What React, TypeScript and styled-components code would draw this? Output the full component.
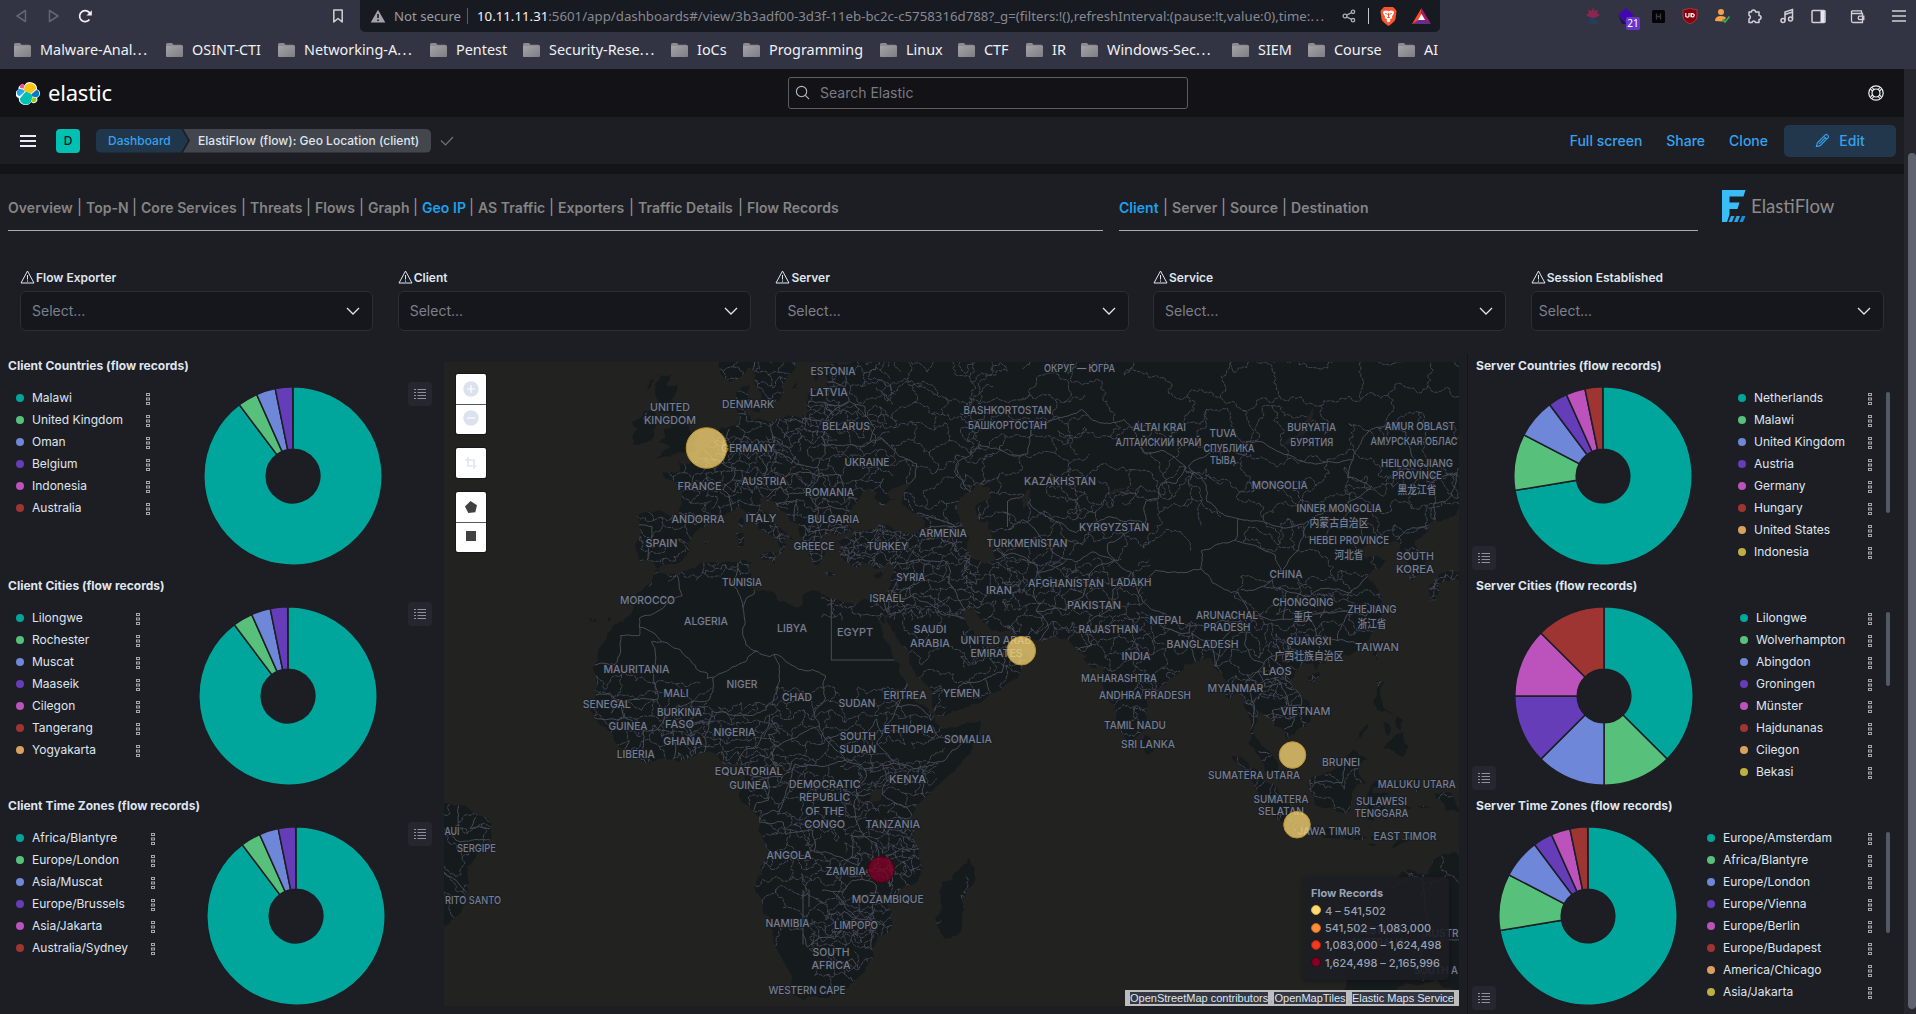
import React from "react";
import styled, { createGlobalStyle } from "styled-components";

const Global = createGlobalStyle`
  * { box-sizing: border-box; }
  html, body { margin: 0; background: #1d1e24; overflow: hidden; }
  body { font-family: Inter, "Noto Sans", "Noto Sans CJK SC", sans-serif; color: #dfe5ef; }
`;

const PALETTE = ["#00a69b", "#57c17b", "#6f87d8", "#663db8", "#bc52bc", "#9e3533", "#daa05d", "#bfaf40"];

/* ---------- browser chrome ---------- */

const Page = styled.div`
  width: 1916px;
  height: 1014px;
  display: flex;
  flex-direction: column;
  overflow: hidden;
`;
const Chrome = styled.div`
  height: 69px;
  flex: none;
  background: #323443;
  font-family: "Noto Sans", sans-serif;
`;
const Toolbar = styled.div`
  height: 32px;
  display: flex;
`;
const NavIcons = styled.div`
  width: 360px;
  flex: none;
  display: flex;
  align-items: center;
  padding-left: 13px;
  gap: 16px;
`;
const Push = styled.span`
  margin-left: auto;
  margin-right: 14px;
  display: flex;
`;
const AddressBar = styled.div`
  width: 1080px;
  flex: none;
  height: 32px;
  background: #181a22;
  border-radius: 0 0 5px 5px;
  display: flex;
  align-items: center;
  padding-left: 10px;
  color: #878991;
`;
const NotSecure = styled.span`
  width: 66px;
  flex: none;
  margin-left: 8px;
  white-space: nowrap;
  color: #9a9ca3;
  font-size: 13.2px;
`;
const Rule = styled.span<{ $m: string; $c: string }>`
  width: 1px;
  flex: none;
  height: 16px;
  background: ${(p) => p.$c};
  margin: ${(p) => p.$m};
`;
const Url = styled.span`
  width: 854px;
  flex: none;
  white-space: nowrap;
  font-size: 13.26px;
  b { color: #f2f2f4; font-weight: 400; }
`;
const Ellipsis = styled.i`
  font-style: normal;
  letter-spacing: 1.5px;
`;
const BarIcon = styled.span<{ $ml: number }>`
  display: flex;
  flex: none;
  margin-left: ${(p) => p.$ml}px;
`;
const Extensions = styled.div`
  flex: 1;
  display: flex;
  align-items: center;
  padding-left: 141px;
`;
const ExtSlot = styled.span<{ $w: number }>`
  position: relative;
  width: ${(p) => p.$w}px;
  flex: none;
  display: flex;
  justify-content: center;
`;
const Count = styled.span`
  position: absolute;
  left: 21px;
  top: 9px;
  width: 14px;
  height: 13px;
  border-radius: 2px;
  background: #6a35c9;
  color: #fff;
  font-size: 10px;
  line-height: 13px;
  text-align: center;
`;
const Bookmarks = styled.div`
  height: 35px;
  display: flex;
  align-items: center;
  padding-left: 14px;
`;
const Bookmark = styled.div<{ $w: number }>`
  display: flex;
  flex: none;
  align-items: center;
  gap: 8px;
  margin-right: 18px;
  color: #f0f0f3;
  font-size: 14.4px;
  line-height: 18px;
  svg { flex: none; }
  span { width: ${(p) => p.$w}px; white-space: nowrap; }
`;

const BOOKMARKS: [string, number, boolean?][] = [
  ["Malware-Anal", 108, true], ["OSINT-CTI", 68], ["Networking-A", 108, true], ["Pentest", 49],
  ["Security-Rese", 104, true], ["IoCs", 28], ["Programming", 93], ["Linux", 34], ["CTF", 24],
  ["IR", 11], ["Windows-Sec", 107, true], ["SIEM", 32], ["Course", 46], ["AI", 14],
];

const Folder = () => (
  <svg width="18" height="16" viewBox="0 0 18 16">
    <defs>
      <linearGradient id="fold" x1="0" y1="0" x2="1" y2="1">
        <stop offset="0" stopColor="#a4a4a8" />
        <stop offset="1" stopColor="#7d7d82" />
      </linearGradient>
    </defs>
    <path d="M0 2.5Q0 1 1.500 1H6L7.500 2.800H15Q17 2.800 17 4.500V13Q17 15 15.500 15H1.500Q0 15 0 13.500Z" fill="#8b8b90" />
    <path d="M0 5Q0 4 1 4H16Q17 4 17 5V13.500Q17 15 15.500 15H1.500Q0 15 0 13.500Z" fill="url(#fold)" />
  </svg>
);

function BrowserChrome() {
  const line = { fill: "none", stroke: "#d0d1d8", strokeWidth: 1.5 };
  return (
    <Chrome>
      <Toolbar>
        <NavIcons>
          <svg width="16" height="16" viewBox="0 0 16 16"><path d="M12.500 2.500V13.500L4 8Z" fill="none" stroke="#646673" strokeWidth="1.500" strokeLinejoin="round" /></svg>
          <svg width="16" height="16" viewBox="0 0 16 16"><path d="M4.500 2.500V13.500L13 8Z" fill="none" stroke="#646673" strokeWidth="1.500" strokeLinejoin="round" /></svg>
          <svg width="16" height="16" viewBox="0 0 16 16"><path d="M12.500 11.500A5.500 5.500 0 1 1 13.200 6" fill="none" stroke="#f1f1f4" strokeWidth="1.700" /><path d="M9.500 7.500H14.800V2.300Z" fill="#f1f1f4" /></svg>
          <Push>
            <svg width="16" height="16" viewBox="0 0 16 16"><path d="M3.800 2H12.200V14L8 10.500L3.800 14Z" {...line} strokeLinejoin="round" /></svg>
          </Push>
        </NavIcons>
        <AddressBar>
          <svg width="16" height="14" viewBox="0 0 16 14"><path d="M8 .8L15.300 13.500H.7Z" fill="#a2a3a9" /><path d="M8 5V9M8 10.500V12" stroke="#181a22" strokeWidth="1.600" /></svg>
          <NotSecure>Not secure</NotSecure>
          <Rule $m="0 9px 0 7px" $c="#5b5d66" />
          <Url><b>10.11.11.31</b>:5601/app/dashboards#/view/3b3adf00-3d3f-11eb-bc2c-c5758316d788?_g=(filters:!(),refreshInterval:(pause:!t,value:0),time:<Ellipsis>...</Ellipsis></Url>
          <BarIcon $ml={11}>
            <svg width="14" height="14" viewBox="0 0 14 14" fill="none" stroke="#a9abb2" strokeWidth="1.300"><circle cx="3" cy="7" r="1.900" /><circle cx="11" cy="2.800" r="1.700" /><circle cx="11" cy="11.200" r="1.700" /><path d="M4.700 6.100L9.500 3.600M4.700 7.900L9.500 10.400" /></svg>
          </BarIcon>
          <Rule $m="0 0 0 12px" $c="#c4c5ca" />
          <BarIcon $ml={11}>
            <svg width="17" height="19" viewBox="0 0 17 19"><path d="M4 0H13L15 2L16.500 4L15.500 12Q15 14.500 8.500 19Q2 14.500 1.500 12L.5 4L2 2Z" fill="#fb542b" /><path d="M3.500 4L6.500 3.500L8.500 4.200L10.500 3.500L13.500 4L14 6L12 9.500L12.300 11L9.800 12.500L10.500 14L8.500 15.500L6.500 14L7.200 12.500L4.700 11L5 9.500L3 6Z" fill="#fff" /><path d="M5.300 6.500L7.600 7.300M11.700 6.500L9.400 7.300M8.500 6V10M7.200 10.500H9.800" stroke="#fb542b" strokeWidth="1" /></svg>
          </BarIcon>
          <BarIcon $ml={15}>
            <svg width="19" height="16" viewBox="0 0 19 16"><path d="M9.500 0L0 16H9.500Z" fill="#ff4724" /><path d="M9.500 0L19 16L9.500 11Z" fill="#9e1f63" /><path d="M0 16L9.500 10.500L19 16Z" fill="#662d91" /><path d="M9.500 5.800L6 12H13Z" fill="#fff" /></svg>
          </BarIcon>
        </AddressBar>
        <Extensions>
          <ExtSlot $w={24}><svg width="18" height="16" viewBox="0 0 18 16"><path d="M9 0L10.500 3L14 1.500L13 5L16 7L12.500 9L9 10L5.500 9L2 7L5 5L4 1.500L7.500 3Z" fill="#8e2450" /><path d="M6 10H12V13H14V16H4V13H6Z" fill="#263c5a" /></svg></ExtSlot>
          <ExtSlot $w={42}><svg width="16" height="16" viewBox="0 0 16 16"><path d="M8 0L15.500 7L8 14L.5 7Z" fill="#4406b5" /><path d="M.5 8L8 15L9 16H4Z" fill="#21105c" /></svg><Count>21</Count></ExtSlot>
          <ExtSlot $w={22}><svg width="13" height="13" viewBox="0 0 13 13"><rect width="13" height="13" rx="1.500" fill="#050507" /><path d="M4.500 3.500V9.500M8.500 3.500V9.500M4.500 6.500H8.500" stroke="#3b3b42" strokeWidth="1.300" /></svg></ExtSlot>
          <ExtSlot $w={42}><svg width="16" height="16" viewBox="0 0 16 16"><path d="M8 0Q10.500 1.600 15 1.600V8Q15 13 8 16Q1 13 1 8V1.600Q5.500 1.600 8 0Z" fill="#86000c" stroke="#b7404b" strokeWidth=".8" /><path d="M3.800 5V8.300Q5.400 10 7 8.300V5M9 5V9.200M9 7.200A1.600 1.600 0 1 1 9 7.400" fill="none" stroke="#fff" strokeWidth="1.200" /></svg></ExtSlot>
          <ExtSlot $w={22}><svg width="16" height="16" viewBox="0 0 16 16"><circle cx="7" cy="4" r="3" fill="#f7a044" /><path d="M1 13Q1 8 7 8Q11 8 12 10L8.500 13.500Z" fill="#f7a044" /><path d="M8.500 11.500L11 14L15.500 8.500" fill="none" stroke="#2fae5b" strokeWidth="1.800" /></svg></ExtSlot>
          <ExtSlot $w={42}><svg width="16" height="16" viewBox="0 0 16 16"><path d="M3 4H5.500A2 2 0 1 1 9.500 4H13V7.500A2 2 0 1 1 13 11.500V14.500H9.500A1.800 1.800 0 0 0 6 14.500H3V11A2 2 0 0 0 3 7.200Z" {...line} strokeLinejoin="round" /></svg></ExtSlot>
          <ExtSlot $w={24}><svg width="16" height="16" viewBox="0 0 16 16"><circle cx="4" cy="12.500" r="2" {...line} /><circle cx="11.500" cy="11" r="2" {...line} /><path d="M6 12.500V4L13.500 1.500V11M6 6.500L13.500 4" {...line} /></svg></ExtSlot>
          <ExtSlot $w={39}><svg width="15" height="15" viewBox="0 0 15 15"><rect x="1" y="1.500" width="13" height="12" rx="1" {...line} /><rect x="9.500" y="2" width="4" height="11" fill="#e6e7eb" /></svg></ExtSlot>
          <ExtSlot $w={39}><svg width="15" height="15" viewBox="0 0 15 15"><path d="M1.500 3V12Q1.500 13.500 3 13.500H12.500V4.500H3Q1.500 4.500 1.500 3Q1.500 1.800 3 1.800H11.500V4M13.800 7.200H9.500Q8.200 7.200 8.200 8.900Q8.200 10.500 9.500 10.500H13.800Z" {...line} strokeWidth="1.300" /></svg></ExtSlot>
          <ExtSlot $w={43}><svg width="14" height="12" viewBox="0 0 14 12"><path d="M0 1H14M0 6H14M0 11H14" {...line} /></svg></ExtSlot>
        </Extensions>
      </Toolbar>
      <Bookmarks>
        {BOOKMARKS.map(([t, w, cut]) => (
          <Bookmark key={t} $w={w}><Folder /><span>{t}{cut && <Ellipsis>...</Ellipsis>}</span></Bookmark>
        ))}
      </Bookmarks>
    </Chrome>
  );
}

/* ---------- Kibana header ---------- */

const Below = styled.div`
  display: flex;
  flex: 1;
  min-height: 0;
`;
const App_ = styled.div`
  width: 1904px;
  display: flex;
  flex-direction: column;
`;
const ScrollTrack = styled.div`
  width: 12px;
  background: #25262e;
  padding: 84px 0 5px 4px;
  div { height: 100%; background: #5f636f; border-radius: 4px; }
`;
const TopHeader = styled.header`
  height: 48px;
  flex: none;
  background: #121217;
  display: flex;
  align-items: center;
  padding: 0 16px;
`;
const Brand = styled.div`
  display: flex;
  align-items: center;
  gap: 8px;
  width: 772px;
  font-family: "Noto Sans", sans-serif;
  font-size: 22px;
  line-height: 28px;
  letter-spacing: -0.2px;
  color: #fff;
  span { margin-top: -2px; }
`;
const Search = styled.div`
  width: 400px;
  height: 32px;
  border: 1px solid #5b5d66;
  border-radius: 3px;
  display: flex;
  align-items: center;
  gap: 10px;
  padding: 0 0 1px 6px;
  font-size: 14px;
  color: #797b83;
`;
const HelpSlot = styled.div`
  margin-left: auto;
  margin-right: 4px;
  display: flex;
`;
const SubHeader = styled.div`
  height: 47px;
  flex: none;
  background: #1d1e24;
  display: flex;
  align-items: center;
  padding: 0 8px 0 20px;
`;
const Gap = styled.div`
  height: 10px;
  flex: none;
  background: #131418;
`;
const Avatar = styled.div`
  width: 24px;
  height: 24px;
  margin: 0 16px 0 20px;
  border-radius: 4px;
  background: #00bfb3;
  color: #10131a;
  font-size: 12px;
  font-weight: 500;
  display: grid;
  place-items: center;
`;
const Crumb = styled.div<{ $first?: boolean }>`
  height: 24px;
  width: ${(p) => (p.$first ? 92 : 248)}px;
  margin-left: ${(p) => (p.$first ? 0 : -5)}px;
  padding-left: ${(p) => (p.$first ? 12 : 15)}px;
  line-height: 24px;
  font-size: 12px;
  font-weight: 500;
  letter-spacing: 0.02px;
  white-space: nowrap;
  color: ${(p) => (p.$first ? "#36a2ef" : "#dfe5ef")};
  background: ${(p) => (p.$first ? "#20374b" : "#43464d")};
  border-radius: ${(p) => (p.$first ? "5px 0 0 5px" : "0 5px 5px 0")};
  clip-path: ${(p) =>
    p.$first
      ? "polygon(0 0, calc(100% - 7px) 0, 100% 50%, calc(100% - 7px) 100%, 0 100%)"
      : "polygon(0 0, 100% 0, 100% 100%, 0 100%, 7px 50%)"};
`;
const Tick = styled.span`
  margin-left: 9px;
  display: flex;
`;
const Actions = styled.div`
  margin-left: auto;
  display: flex;
  align-items: center;
  gap: 24px;
  font-size: 14px;
  font-weight: 500;
  color: #36a2ef;
`;
const EditButton = styled.div`
  width: 112px;
  height: 32px;
  margin-left: -8px;
  border-radius: 5px;
  background: #22374b;
  display: flex;
  align-items: center;
  justify-content: center;
  gap: 9px;
`;

function KibanaHeader() {
  return (
    <>
      <TopHeader>
        <Brand>
          <svg width="24" height="24" viewBox="0 0 32 32">
            <path d="M32 16.800a6 6 0 0 0-4-5.700A9.100 9.100 0 0 0 11.100 5.900 4.900 4.900 0 0 0 3.500 11.300a6.100 6.100 0 0 0 .1 11.500 9.100 9.100 0 0 0 16.700 5.200 4.800 4.800 0 0 0 7.800-5.300 6.100 6.100 0 0 0 3.900-5.900" fill="#fff" />
            <path d="M12.600 13.800l7 3.200 7.100-6.200A8 8 0 0 0 11.400 7.700l-1.200 6.100z" fill="#fec514" />
            <path d="M5.300 21.200A8 8 0 0 0 20.700 24.400L21.900 18.300 20.300 15.200 13.300 12z" fill="#00bfb3" transform="translate(-.1 2)" />
            <path d="M5.300 9.100l4.800 1.100L11.200 4.700A3.800 3.800 0 0 0 5.300 9.100" fill="#f04e98" />
            <path d="M4.900 10.200a5.300 5.300 0 0 0-.3 10.100l6.700-6.100-1.200-2.600z" fill="#1ba9f5" />
            <path d="M20.900 27.400a3.800 3.800 0 0 0 5.900-4.600L22 21.700z" fill="#93c90e" />
            <path d="M21.800 20.500l5.300 1.200a5.300 5.300 0 0 0 .3-10.100l-6.900 6z" fill="#07c" />
          </svg>
          <span>elastic</span>
        </Brand>
        <Search>
          <svg width="15" height="15" viewBox="0 0 16 16" fill="none" stroke="#b5b8c0" strokeWidth="1.200"><circle cx="7" cy="7" r="5.500" /><path d="M11 11L15 15" /></svg>
          Search Elastic
        </Search>
        <HelpSlot>
          <svg width="16" height="16" viewBox="0 0 16 16" fill="none" stroke="#f0f2f6" strokeWidth="1.200"><circle cx="8" cy="8" r="7.200" /><circle cx="8" cy="8" r="4" /><path d="M2.500 4.200L5 6.200M4.200 2.500L6.200 5M13.500 4.200L11 6.200M11.800 2.500L9.800 5M2.500 11.800L5 9.800M4.200 13.500L6.200 11M13.500 11.800L11 9.800M11.800 13.500L9.800 11" /></svg>
        </HelpSlot>
      </TopHeader>
      <SubHeader>
        <svg width="16" height="12" viewBox="0 0 16 12"><path d="M0 1H16M0 6H16M0 11H16" stroke="#e8ecf4" strokeWidth="2" /></svg>
        <Avatar>D</Avatar>
        <Crumb $first>Dashboard</Crumb>
        <Crumb>ElastiFlow (flow): Geo Location (client)</Crumb>
        <Tick><svg width="14" height="10" viewBox="0 0 14 10"><path d="M1 4.500L5.500 9L13 1" fill="none" stroke="#6f727b" strokeWidth="1.200" /></svg></Tick>
        <Actions>
          <span>Full screen</span><span>Share</span><span>Clone</span>
          <EditButton>
            <svg width="15" height="15" viewBox="0 0 16 16" fill="none" stroke="#36a2ef" strokeWidth="1.200"><path d="M1.500 14.500L2.500 10.500L11 2Q12 1 13 2L14 3Q15 4 14 5L5.500 13.500ZM9.500 3.500L12.500 6.500M4.500 11.500L11 5" /></svg>
            Edit
          </EditButton>
        </Actions>
      </SubHeader>
      <Gap />
    </>
  );
}

/* ---------- dashboard navigation and filters ---------- */

const NavRow = styled.div`
  height: 57px;
  flex: none;
  display: flex;
  padding-left: 8px;
`;
const Tabs = styled.nav<{ $w: number; $mr: number }>`
  width: ${(p) => p.$w}px;
  margin-right: ${(p) => p.$mr}px;
  border-bottom: 1px solid #a9aaad;
  display: flex;
  align-items: center;
  padding-bottom: 12px;
  padding-top: 22px;
  font-size: 14px;
  font-weight: 600;
  color: #858585;
`;
const Tab = styled.span<{ $w: number; $on?: boolean }>`
  width: ${(p) => p.$w}px;
  white-space: nowrap;
  letter-spacing: 0.05px;
  color: ${(p) => (p.$on ? "#1ba1ee" : "inherit")};
`;
const Bar = styled.span`
  width: 13px;
  text-align: center;
  font-weight: 400;
  font-size: 15px;
  line-height: 18px;
  color: #9a9a9a;
`;
const Logo = styled.div`
  display: flex;
  align-items: center;
  gap: 5px;
  padding-top: 6px;
  padding-bottom: 0;
  font-family: Lato, sans-serif;
  font-size: 18.6px;
  color: #8c8c8e;
`;

const NAV: [string, number][] = [
  ["Overview", 65], ["Top-N", 42], ["Core Services", 96], ["Threats", 52], ["Flows", 40], ["Graph", 41],
  ["Geo IP", 43], ["AS Traffic", 67], ["Exporters", 67], ["Traffic Details", 96], ["Flow Records", 92],
];
const SIDES: [string, number][] = [["Client", 40], ["Server", 45], ["Source", 48], ["Destination", 79]];

const TabList = ({ items, active }: { items: [string, number][]; active: string }) => (
  <>
    {items.map(([t, w], i) => (
      <React.Fragment key={t}>
        {i > 0 && <Bar>|</Bar>}
        <Tab $w={w} $on={t === active}>{t}</Tab>
      </React.Fragment>
    ))}
  </>
);

const Filters = styled.div`
  height: 123px;
  flex: none;
  display: grid;
  grid-template-columns: repeat(5, 353.4px);
  column-gap: 24.3px;
  padding: 38px 0 0 20px;
`;
const FilterLabel = styled.div`
  height: 22px;
  display: flex;
  align-items: center;
  gap: 1px;
  padding-bottom: 6px;
  font-size: 12px;
  font-weight: 600;
  color: #dfe5ef;
`;
const Select = styled.div<{ $pad: number }>`
  height: 40px;
  border: 1px solid #2c2d35;
  border-radius: 6px;
  background: #16171c;
  display: flex;
  align-items: center;
  justify-content: space-between;
  padding: 0 12px 1px ${(p) => p.$pad}px;
  font-size: 14px;
  color: #7b808b;
`;

/* ---------- donut panels ---------- */

const Board = styled.div`
  height: 660px;
  flex: none;
  display: flex;
`;
const PanelColumn = styled.div<{ $right?: boolean }>`
  width: ${(p) => (p.$right ? 437 : 444)}px;
  border-left: ${(p) => (p.$right ? "1px solid #131418" : "none")};
  flex: none;
`;
const Panel = styled.section`
  height: 220px;
  position: relative;
`;
const PanelTitle = styled.h2`
  margin: 0;
  height: 24px;
  line-height: 23px;
  padding-left: 8px;
  font-size: 12px;
  font-weight: 700;
  letter-spacing: 0.02px;
  white-space: nowrap;
  color: #dfe5ef;
`;
const PanelBody = styled.div<{ $right?: boolean }>`
  height: 196px;
  display: flex;
  flex-direction: ${(p) => (p.$right ? "row-reverse" : "row")};
  padding: ${(p) => (p.$right ? "0 14px 0 0" : "0 9px 0 16px")};
`;
const Legend = styled.ul<{ $w: number }>`
  list-style: none;
  margin: 0;
  padding: 8px 0 0;
  width: ${(p) => p.$w}px;
`;
const LegendItem = styled.li`
  height: 22px;
  display: flex;
  align-items: center;
  font-size: 12px;
  color: #dfe5ef;
  white-space: nowrap;
  svg { margin-left: auto; margin-top: 3px; }
`;
const Dot = styled.i<{ $c: string }>`
  width: 8px;
  height: 8px;
  border-radius: 50%;
  margin-right: 8px;
  margin-top: 2px;
  background: ${(p) => p.$c};
`;
const Thumb = styled.div<{ $h: number }>`
  width: 4px;
  height: ${(p) => p.$h}px;
  margin: 14px 0 0 13px;
  border-radius: 2px;
  background: #535966;
`;
const ChartArea = styled.div`
  flex: 1;
  display: flex;
  justify-content: center;
  padding-top: 8px;
`;
const ListButton = styled.div<{ $right?: boolean }>`
  position: absolute;
  left: ${(p) => (p.$right ? 4 : 408)}px;
  top: ${(p) => (p.$right ? 192 : 28)}px;
  width: 24px;
  height: 24px;
  border-radius: 4px;
  background: #25262e;
  display: grid;
  place-items: center;
`;

type Chart = { title: string; names: string[]; legend: number; stops: number[]; thumb?: number };

const LOPSIDED = [0, 323, 336, 348.5, 359.8];
const SEVEN = [0, 260.7, 297.5, 323.2, 335.8, 348.3, 359.8];

const LEFT: Chart[] = [
  { title: "Client Countries (flow records)", legend: 135, stops: LOPSIDED, names: ["Malawi", "United Kingdom", "Oman", "Belgium", "Indonesia", "Australia"] },
  { title: "Client Cities (flow records)", legend: 125, stops: LOPSIDED, names: ["Lilongwe", "Rochester", "Muscat", "Maaseik", "Cilegon", "Tangerang", "Yogyakarta"] },
  { title: "Client Time Zones (flow records)", legend: 140, stops: LOPSIDED, names: ["Africa/Blantyre", "Europe/London", "Asia/Muscat", "Europe/Brussels", "Asia/Jakarta", "Australia/Sydney"] },
];
const RIGHT: Chart[] = [
  { title: "Server Countries (flow records)", legend: 135, stops: SEVEN, thumb: 121, names: ["Netherlands", "Malawi", "United Kingdom", "Austria", "Germany", "Hungary", "United States", "Indonesia"] },
  { title: "Server Cities (flow records)", legend: 133, stops: [0, 135, 180, 225, 270, 315, 360], thumb: 74, names: ["Lilongwe", "Wolverhampton", "Abingdon", "Groningen", "Münster", "Hajdunanas", "Cilegon", "Bekasi"] },
  { title: "Server Time Zones (flow records)", legend: 166, stops: SEVEN, thumb: 101, names: ["Europe/Amsterdam", "Africa/Blantyre", "Europe/London", "Europe/Vienna", "Europe/Berlin", "Europe/Budapest", "America/Chicago", "Asia/Jakarta"] },
];

const polar = (r: number, deg: number) => {
  const a = (deg * Math.PI) / 180;
  return `${(90 + r * Math.sin(a)).toFixed(2)} ${(90 - r * Math.cos(a)).toFixed(2)}`;
};

function Donut({ stops }: { stops: number[] }) {
  return (
    <svg width="180" height="180" viewBox="0 0 180 180">
      {stops.slice(1).map((end, i) => {
        const start = stops[i];
        const big = end - start > 180 ? 1 : 0;
        return (
          <path
            key={i}
            d={`M${polar(89.2, start)}A89.200 89.200 0 ${big} 1 ${polar(89.2, end)}L${polar(26.8, end)}A26.800 26.800 0 ${big} 0 ${polar(26.8, start)}Z`}
            fill={PALETTE[i]}
            stroke="#1d1e24"
            strokeWidth="1.500"
          />
        );
      })}
    </svg>
  );
}

const Kebab = () => (
  <svg width="6" height="14" viewBox="0 0 6 14" fill="none" stroke="#a3a7b0" strokeWidth="1">
    <rect x="1.500" y="1.500" width="3" height="2" /><rect x="1.500" y="6" width="3" height="2" /><rect x="1.500" y="10.500" width="3" height="2" />
  </svg>
);

function DonutPanel({ chart, right }: { chart: Chart; right?: boolean }) {
  return (
    <Panel>
      <PanelTitle>{chart.title}</PanelTitle>
      <PanelBody $right={right}>
        {chart.thumb && <Thumb $h={chart.thumb} />}
        <Legend $w={chart.legend}>
          {chart.names.map((n, i) => (
            <LegendItem key={n}><Dot $c={PALETTE[i]} />{n}<Kebab /></LegendItem>
          ))}
        </Legend>
        <ChartArea><Donut stops={chart.stops} /></ChartArea>
      </PanelBody>
      <ListButton $right={right}>
        <svg width="12" height="12" viewBox="0 0 12 12" stroke="#8d919b" strokeWidth="1"><path d="M0 1.500H2M3.500 1.500H12M0 4.500H2M3.500 4.500H12M0 7.500H2M3.500 7.500H12M0 10.500H2M3.500 10.500H12" /></svg>
      </ListButton>
    </Panel>
  );
}

/* ---------- map ---------- */

const MapPanel = styled.section`
  width: 1015px;
  height: 644px;
  margin: 8px 8px 0 0;
  position: relative;
  overflow: hidden;
  background: #222220;
`;
const MapTools = styled.div`
  position: absolute;
  left: 12px;
  top: 12px;
  display: flex;
  flex-direction: column;
  gap: 14px;
`;
const ToolGroup = styled.div`
  width: 30px;
  border-radius: 2px;
  background: #fff;
  box-shadow: 0 0 0 1px #16181b;
`;
const Tool = styled.div`
  height: 30px;
  display: grid;
  place-items: center;
  & + & { border-top: 1px solid #535966; padding-bottom: 3px; }
`;
const MapLegend = styled.div`
  position: absolute;
  left: 859px;
  top: 515px;
  width: 146px;
  height: 103px;
  padding: 8px 8px;
  border-radius: 5px;
  background: rgba(29, 30, 36, 0.88);
  box-shadow: 0 1px 4px rgba(0, 0, 0, 0.35);
  color: #98a2b3;
  font-size: 11px;
  h3 { margin: 0; font-size: 11px; line-height: 17px; font-weight: 700; }
`;
const Band = styled.div`
  height: 17.400px;
  display: flex;
  align-items: center;
  gap: 4px;
  font-weight: 500;
  white-space: nowrap;
`;
const BandDot = styled.i<{ $c: string; $b: string }>`
  width: 10px;
  height: 10px;
  flex: none;
  margin-top: -1px;
  border-radius: 50%;
  background: ${(p) => p.$c};
  border: 1px solid ${(p) => p.$b};
`;
const Attribution = styled.div`
  position: absolute;
  right: 0;
  bottom: 0;
  width: 334px;
  height: 16px;
  padding: 0 5px;
  background: #bdbdbd;
  color: #9a9fa8;
  font-family: "Liberation Sans", Arial, sans-serif;
  font-size: 11px;
  line-height: 12px;
  display: flex;
  align-items: center;
  justify-content: space-between;
  white-space: nowrap;
  a { background: #343741; color: #dfe5ef; }
`;

// Web Mercator at zoom 2 (2048 px around the globe).
const RAD = 2048 / (2 * Math.PI);
const px = (lon: number) => 245 + (lon * 2048) / 360;
const py = (lat: number) => 426.7 - RAD * Math.asinh(Math.tan((lat * Math.PI) / 180));

const rng = (seed: number) => () => {
  seed = (seed * 1664525 + 1013904223) % 4294967296;
  return seed / 4294967296;
};

type Pt = [number, number];

const parse = (s: string): Pt[] =>
  s.trim().split(/\s+/).map((p) => {
    const [a, b] = p.split(",").map(Number);
    return [px(a), py(b)];
  });

// Breaks a segment at its midpoint until it is short, nudging each new vertex sideways.
function rough(a: Pt, b: Pt, amp: number, r: () => number, out: Pt[]) {
  const dx = b[0] - a[0];
  const dy = b[1] - a[1];
  const len = Math.hypot(dx, dy);
  if (len < 4) {
    out.push(b);
    return;
  }
  const k = (r() - 0.5) * amp;
  const m: Pt = [(a[0] + b[0]) / 2 - dy * k, (a[1] + b[1]) / 2 + dx * k];
  rough(a, m, amp, r, out);
  rough(m, b, amp, r, out);
}

function trace(pts: Pt[], amp: number, seed: number, close = false) {
  const r = rng(seed);
  const out: Pt[] = [pts[0]];
  for (let i = 1; i < pts.length; i++) rough(pts[i - 1], pts[i], amp, r, out);
  if (close) rough(pts[pts.length - 1], pts[0], amp, r, out);
  return "M" + out.map((p) => `${p[0].toFixed(1)} ${p[1].toFixed(1)}`).join("L") + (close ? "Z" : "");
}

const COASTS = [
  "-5.9,35.8 -5.3,35.9 -5.2,35.4 -4,35.2 -3,35.3 -2,35.1 -1,35.7 0,35.9 1.5,36.5 3,36.9 5,36.8 7,37 8.5,36.9 9.8,37.3 10.3,37.2 10.2,36.8 11,37 10.5,36.4 10.6,35.8 11,35.2 10.6,34.7 10,34.2 10.3,33.7 11.1,33.2 12.5,32.8 13.2,32.9 15.2,32.4 15.4,31.6 16,31.2 18,30.7 19,30.3 20,30.9 19.9,31.7 20.1,32.3 21.5,32.9 23,32.7 23.2,32.3 25,31.8 25.3,31.5 27,31.2 29,30.8 30.2,31.3 31,31.6 32.5,31.1 32.5,29.9 32.6,29.5 33.6,27.8 34,26.5 35.5,24 35.6,23.2 37,21.5 37.2,19.5 38.5,18 39.3,15.8 40,15 41.2,14.6 42.5,13.2 43.2,12.4 43.3,11.5 44.5,10.4 46,10.8 48,11.2 50,11.5 51.2,11.9 51.1,10.6 50.8,9.3 49.8,7.8 48.5,5.3 47,3.5 45.5,2.2 43.5,.5 42,-1 41,-2 40.2,-2.7 39.5,-4.2 38.8,-6 39.5,-7 39.4,-8.5 40.4,-10.4 40.5,-12 40.7,-14.8 39.8,-16.4 37,-17.8 36,-19 34.8,-19.9 35.5,-22 35.4,-24 33,-25.2 32.7,-26.5 32.5,-28.5 31,-29.9 30,-31.3 28,-33 25.7,-34 22,-34.2 20,-34.8 18.5,-34.2 18,-32.5 18.2,-31.6 17,-29.5 16.3,-28.5 15.2,-26.8 14.8,-25 14.4,-22.5 13,-20.3 11.8,-18 11.8,-16 12.5,-13.5 13.7,-12 13.8,-10.5 13,-8.8 12.3,-6 11.8,-4.6 9.8,-2.7 8.8,-.8 9.4,.5 9.8,2 9.6,3.8 8.9,4.5 7,4.4 5.9,4.4 5,5.9 4,6.4 2,6.3 1,5.9 -2,4.8 -3.5,5.1 -6,4.9 -7.5,4.4 -9.2,5.6 -11,6.8 -12.5,7.5 -13.2,8.6 -13.5,9.6 -15,10.9 -16.7,12.4 -17.4,14.7 -16.5,16 -16.2,18 -16.3,19.2 -17,20.9 -16,22 -16,23.6 -15,24.8 -14.4,26.2 -13,27.7 -11.5,28.2 -10,29.5 -9.7,31 -9.2,32.5 -7.5,33.6 -6.6,34.3",
  "32.5,31.1 34.2,31.3 34.9,32.8 35.5,33.9 35.9,35.8 36.1,36.7 35,36.6 34,36.2 32.5,36.1 30.6,36.8 29.5,36.2 28,36.8 27.3,37.2 26.4,38.5 26.8,39.3 26.1,39.9 27.5,40.4 29,40.5 29,41.2 31.3,41.2 33.3,42 35,42 36.2,41.3 38,41 40,41 41.5,41.5 41.5,42.5 39,43.8 37.4,44.8 37.5,45.5 38.3,46.5 39,47.2 36.5,46.7 35.2,46.3 34.9,45.9 35.3,45.3 36.4,45.3 35,44.9 33.7,44.4 33,45.2 32.5,45.4 33.2,46.1 31.5,46.6 30.5,46.2 29.6,45 28.6,44 28,43.2 27.7,42.5 28.1,41.7 29,41.2 27.5,40.9 26.2,40.6 25,40.9 24,40.8 23.3,40.2 22.8,40.4 23.2,39.2 24,38.2 23.5,37.5 22.8,36.6 21.7,36.9 21.2,38.2 20.2,39.5 19.4,40.6 19.4,41.9 17.5,43 15.5,44 14.5,45.2 13.6,45 13.5,45.7 12.4,45.3 12.5,44.2 13.6,43.6 14.2,42.4 15.8,41.9 16.5,41.2 18.4,40 17,40.5 16.6,39.7 17.1,39 16.2,38 15.7,38 16.1,39 15.6,40.1 14.3,40.7 13,41.3 11.2,42.4 10.3,43.6 8.8,44.4 7.5,43.8 6,43.1 4,43.5 3.1,43 3.2,41.9 1,41 -.3,39.5 .2,38.7 -.7,37.7 -2,36.8 -4.5,36.7 -5.6,36 -6.4,36.9 -8.8,37 -9.4,38.7 -8.7,40.5 -8.8,42 -9.2,43.1 -7.8,43.7 -4,43.4 -1.8,43.4 -1.2,44.8 -1.2,46 -2.5,47.3 -4.5,48 -4.6,48.5 -1.6,48.6 -1.8,49.7 -1.2,49.4 .2,49.5 1.6,50.3 2.5,51.1 3.8,51.7 4.7,53 7,53.5 8.6,53.8 8.8,54.8 8.1,55.6 8.3,57 10.6,57.7 10.3,56.4 10.9,56.3 9.7,55.2 10.9,54.3 12.5,54.4 14.2,54 16.5,54.5 18.6,54.7 19.8,54.4 21,55.2 21.1,56.8 21.8,57.5 23,57 24.3,57.2 24.4,58.3 23.5,58.8 24.5,59.4 27.5,59.5 30,59.9 28.5,60.4 25,60.2 22.8,59.9 22.5,61.5 22,63 140,63 140,54 140.5,50 140,48 138,46 135.5,44.3 133,42.7 131,42.6 130,42 129.7,41 127.5,39.8 128.4,38.5 129.4,37 129.3,35.5 127.5,34.6 126.4,34.5 126.5,36.8 125.2,37.8 125,39.5 124,39.9 121.5,38.9 121.3,39.6 122,40.6 120.8,40.5 119,39.2 117.8,38.8 119,37.3 120.8,37.8 122.5,37.2 120.5,36 119.3,35 120.5,33.8 121.8,31.8 121,30.5 122,29.8 121.5,28.3 119.8,26 118,24.4 116.5,23 114,22.3 111.8,21.6 110.4,21.2 110.3,20.3 109.8,21.5 108,21.6 106.6,20.2 105.7,18.8 107,17 108.8,15.3 109.3,13 109.2,11.7 107,10.4 106.5,9.5 105,8.7 104.9,10 103,11 102.4,12.2 100.9,12.8 100.4,13.5 99.9,12 99.2,10.2 100.3,8.3 101.5,6.9 103.2,5 103.5,3 104.2,1.4 103.4,1.4 101.3,2.9 100.4,5.5 99.5,7 98.3,8 98.7,10.3 98.5,12.5 97.7,15.5 96.5,16.5 95.3,15.8 94.3,16 94.5,18.2 93.6,19.8 92.2,20.8 91.8,22.4 90.5,22.2 89,21.7 87,21.3 86.8,20.3 85,19.3 82.5,17 81.8,16.2 80.3,15.7 80.2,13.3 79.8,11 79.8,10.2 79,9.3 78.2,8.8 77.5,8 76.4,9.6 75,12 74.3,14.8 73.2,17 72.8,19.2 72.8,21 72.3,21.2 71,20.8 69.2,22.2 70,22.8 68.6,23.4 67.3,24.6 66.5,25.4 62,25.1 59,25.4 57.3,25.8 56.6,27 54.5,26.6 52.5,27.5 51,28.8 50,30.1 48.7,30.2 48,29.5 48.8,28 50.1,26.6 50.1,25.5 50.8,24.8 51,25.9 51.6,25.5 51.4,24.4 52.5,24.2 54.5,24.4 56,26 56.4,24.8 57,24 58.7,23.6 59.8,22.5 58.5,20.4 57.7,19 55.3,17.5 53,16.5 52,15.5 49,14.2 45.5,13 43.5,12.7 42.8,15 42.6,16.8 41,18.8 39.2,21 38.5,23.5 37,25 35.5,27.5 34.7,28.2 35,29.5 34.3,27.8 33.2,28.8 32.6,29.9",
  "5,62 5,60 5.5,58.8 7,58 8.5,58.2 10.5,59.3 11.2,59 12,57.5 12.8,56 12.9,55.4 14.2,55.5 14.5,56 16,56.2 16.6,57.8 18.8,59.5 18.5,60.5 17.3,61.5 17,63",
  "11.1,55.7 12.5,56 12.2,55 11.2,55.2",
  "18.2,57.4 19,57.9 18.6,57.1",
  "22,58.5 23.2,58.6 22.3,58",
  "-5.7,50.1 -3.5,50.3 -2,50.7 1,50.9 1.4,51.3 .8,51.6 1.7,52.6 .3,52.9 0,53.6 -1.4,54.9 -2,55.9 -3.3,56.2 -2,57.3 -2,57.7 -4,57.7 -3.1,58.6 -5,58.6 -6,57 -5.2,56 -5,54.9 -3.4,54.9 -3.1,53.4 -4.5,53.3 -4.2,52.4 -5.2,51.9 -3,51.4 -4.5,50.9",
  "-6.1,53.3 -6.4,52.3 -9.8,51.6 -9.9,52.3 -9,53.2 -10,54.1 -8.4,54.5 -8,55.2 -6.5,55.2 -5.6,54.5",
  "-7,57.8 -6.2,58.4 -7.4,57.1",
  "8.2,40.9 9.6,40.9 9.6,39.2 8.5,39",
  "8.6,42.5 9.4,43 9.5,42 9.2,41.4",
  "12.5,38 15.6,38.2 15.1,36.7 12.6,37.6",
  "23.6,35.5 26.2,35.2 24.8,34.9",
  "32.4,35 34.5,35.6 33.8,34.9 33,34.6",
  "2.4,39.6 3.3,39.8 3,39.3",
  "-17.5,28.8 -17,28.5 -17.3,28.2",
  "-16.9,28.4 -16.2,28.5 -16.6,28",
  "-14.4,28.6 -13.8,28.9 -14,28.1",
  "49.3,-12 50.4,-15.5 49.5,-17 48,-22 47,-25 45,-25.5 43.7,-23.5 43.4,-22 44.4,-20 44,-17.5 44.5,-16.2 46.3,-15.7 48,-13.6",
  "79.9,9.7 81.2,8.6 81.8,7 80.6,5.9 79.9,7",
  "95.3,5.6 97.5,5.2 100.3,2.7 103.5,.2 103.8,-1 106,-3 105.8,-5.8 104.5,-5.8 102.3,-4 100.3,-1 98.7,1.7",
  "105.2,-6.8 106.2,-5.9 108.5,-6.7 110.8,-6.4 112.7,-7 114.5,-7.8 114.4,-8.7 110,-8.1 106.5,-7.4",
  "109,1.5 109.6,2 111.3,2.4 113,3.1 115,5 116.8,7 119.2,5.2 117.6,3.5 118,2.2 119,1 117.5,.8 116.5,-1.5 116.2,-3.9 114.6,-4.1 113,-3.2 110.2,-2.9 110,-1.3 109.1,-.2",
  "119.8,.2 120.8,1.3 124,.8 125.2,1.5 124.3,.4 120.2,.4 120.2,-.9 121.5,-.9 123.3,-.8 121.7,-1.9 122.3,-3.5 123,-4.2 122.6,-5.5 121.5,-4.7 121,-2.8 120.3,-3 120.4,-5.6 119.4,-5.4 119.5,-3.5 118.8,-2.7",
  "120.6,18.5 122.2,18.4 121.6,16 122,14.2 124,12.8 121,13.7 120.3,15",
  "122,7 123.5,8.6 125.5,9.8 126.5,7.3 125.4,5.6 124,6.6",
  "122,11.7 123.2,11 122.8,9.2 122.3,10.5",
  "124.4,12.5 125.5,12 125,10.2 124.4,10.7",
  "117.2,8.4 119.4,11.3 119.2,10.4",
  "121,25.1 121.9,25 120.9,22 120.1,23",
  "108.7,19.3 110.6,20.1 110.9,19.5 109.5,18.2",
  "130,33.5 131,34 131,34.4 133,35.5 136,35.7 137,37 138,37 138,34.6 135.8,33.5 135,34.6 133,34.3 131.8,33.9 132,32.8 131.3,31.4 130.2,31.3 130,32.8",
  "127.5,1.8 128.6,1.5 127.9,-.7",
  "128,-3.2 130.7,-3.2 129.5,-3.5",
  "126,-3.2 127,-3.2 126.6,-3.8",
  "123.5,-10.3 125,-8.9 127.2,-8.4 125,-9.7",
  "119.8,-8.5 122.8,-8.2 122,-8.9 120,-8.9",
  "116.8,-8.5 119,-8.4 118.7,-8.9 116.8,-9",
  "115,-8.3 116.7,-8.4 116,-8.9",
  "119,-9.5 120.8,-10 119.8,-10",
  "131,-.8 134,-.8 135,-3.3 137,-2 137,-4.8 133,-4 132.8,-2.8 131.2,-1.5",
  "115.7,-32 115,-29.5 113.5,-26.5 113.7,-22.5 116.8,-20.6 119,-20 121.5,-19 122.3,-17.3 123.7,-17 124.5,-15.5 126.5,-14 128.2,-14.9 129.6,-15 130.7,-12.5 132.6,-11.4 136.8,-12.2 135.5,-15 140,-17.5 140,-36.5 138,-35.5 136,-35 134,-33 131,-31.5 126,-32.3 123.5,-34 120,-34 118,-35 115,-34.3",
  "-43.2,-2.6 -41.5,-2.9 -39.9,-2.9 -38.5,-3.7 -37,-4.8 -35.3,-5.2 -34.8,-7 -35,-9 -37,-11 -38,-12.7 -39,-13.5 -39,-17 -39.7,-19.5 -41,-21.9 -42,-23 -45,-23.5 -50,-25 -50,-1",
].map((s, i) => trace(parse(s), 0.34, 11 + i, true)).join("");

const LAKES = [
  "47.5,43 47,44.5 48.5,46 50.5,47 53,46.7 53.1,45.4 51,44.8 50.3,44.4 51,42.5 52.7,42.5 52.6,41.5 53.8,40 53.8,37.2 52,36.7 50,37.4 49,38.5 49.3,40.3 48,42",
  "58.5,45.500 60,46.6 59.5,44.9 58.7,44",
  "104,51.6 106.5,52.5 109.8,55.6 109.2,53.6 106,51.9",
  "31.8,-.5 34,0 33.8,-2 31.8,-2.2",
  "73.6,45.5 75,46.6 79,46.6 75,46.2",
  "30.8,60.6 32.6,60.8 32.8,59.8 31.2,59.9",
].map((s, i) => trace(parse(s), 0.3, 71 + i, true)).join("");

const BORDERS = [
  "-2.1,35.1 -1.7,33.2 -1.2,32.1 -3,31.5 -5,30 -8.7,28.7 -8.7,27.3 -4.8,25 1.2,21.1 1.2,20.7 3.2,19.9 3.2,19 4.2,19.2 7.500,20.900 12,23.500 14.2,22.6 15,23 24,19.5 24,15.7 22.5,14 22,12.6 22.9,11 24,8.7 27.4,5 30.8,3.5",
  "-8.7,27.3 -8.7,26 -12,26 -12,23.5 -13,21.3 -17,21", "-4.8,25 -6.6,25 -5.5,16.5 -5.5,15.5 -9.3,15.5 -12,15 -14,16.6 -16.4,16.2",
  "8.6,36.9 8.3,35 7.5,33.8 9,32 9.5,30.3 9.9,28 9.4,26.2 10,24.5 12,23.5", "9.5,30.3 10.3,31.9 11.5,32.4 11.5,33.1",
  "15,23 15.9,20.3 15.5,16.9 13.5,14 13.6,13.7 9,12.8 4,13.5 3.6,11.7 2.7,9 2.7,6.4", "4.2,19.2 4.2,16.8 3.5,15.4 .2,15 -2,14.2 -4.3,12.7 -5.5,10.4 -8,10.2 -11.4,12.4 -12,15",
  "-5.5,10.4 -2.8,9.7 -2.8,5.1", "-2.8,9.7 -2.8,11 0,11.1 1.2,6.1", "-8,10.2 -8,8 -7.5,4.4", "-11.4,12.4 -16.7,12.4", "-10.5,8.5 -11.4,6.9", "0,11.1 2.2,11.8 3.6,11.7",
  "8.6,4.8 10,7 12,7.5 13.3,10 14.2,12.8", "14.4,12 15.5,10 14,9.5 15.2,7.3 14.5,5 16.2,2.2 11.3,2.2 9.8,2.3", "11.3,1 14,2 14,-2 12,-2.4 11.2,-4", "15.2,7.3 19,9 22.9,11",
  "27.4,5 22.5,4.1 18.6,4.3 18,2 17,-1 15.8,-4 13,-4.6 12.3,-5.9 16.6,-5.9 17,-8 21.8,-7.3 22,-11 24,-11 27,-12 29.8,-13.4 29.8,-12.2 28.5,-12 28.6,-8.5 30.8,-8.3 33,-9.5",
  "30.8,-8.3 29.5,-6 29.3,-4.5 29,-2.7 29.6,-1.4 29.6,.5 31.2,2.2 30.8,3.5 34,4.2 34.9,1.5 34,.1 34,-1 37.6,-3 39.2,-4.7", "29.6,-1.2 34,-1",
  "33,-9.5 33.3,-12 32.7,-13.7 34.5,-14.5 35.3,-17 35.8,-16 35.5,-14.5 34.6,-11.6 40.4,-10.5", "32.7,-13.7 30.3,-15 30.4,-15.7",
  "23.4,-17.6 25.3,-17.8 27,-17.9 28.9,-15.9 30.4,-15.7 32.9,-16.7 32.5,-19 32.5,-21.3 31.3,-22.4 29.4,-22.2 27.5,-20.5 25.3,-17.8", "31.3,-22.4 32,-24.5 32,-26.8",
  "20,-24.8 20.8,-26.8 23,-25.3 25.6,-25.5 27,-23.7 29.4,-22.2", "27,-29.6 28.7,-28.6 29.4,-29.6 28,-30.6 27,-29.6",
  "24,8.7 28,9.4 31,9.8 33,12.2 34,9.5 33,8 36,4.5 34,4.2", "34,9.5 34.3,10.6 36,12.7 36.5,14.3 38.5,18", "36.5,14.3 40,14.5 42.4,12.5",
  "36,4.5 39.5,3.5 41.9,3.9 41,2.8 41,-1 41.6,-1.7", "41.9,3.9 45,5 48,8 44,9 42.8,10.9",
  "35,29.3 37,29.6 38,30.5 37,31.5 39,32.1 42,31.1 44.7,29.2 46.5,29.1 48.5,28.5", "39,32.1 38.8,33.4 41,34.4 41.3,36.5 42.4,37.1 44.8,37.2 46,35.5 45.5,34 47.8,31 48.5,30",
  "35.7,32.7 36.8,32.3 38.8,33.4", "36,36 36.7,36.8 42.4,37.1", "34.9,29.5 34.3,31.3", "35,29.5 35.6,32.7 36.6,34.2", "42.8,16.4 44,17.4 47,17 48.2,18.2 52,19 53.1,16.6",
  "52,19 55,20 55.6,22 55.2,22.7 52.6,22.9 51.6,24.2", "55.2,22.7 55.8,24.3 56.3,24.9",
  "53.9,37.3 57,38.2 61.2,36.6 60.5,34 61,31.4 61.8,30.9 61,29.8 63.2,27.2 61.6,25.2", "61,29.8 66.3,29.9 67,31.3 69.3,32 70,34 71.5,36.3 74.9,37.2 71,38.4 68,37 66.5,37.4 64.5,36.3 61.2,35.5",
  "56,41.3 58.6,42.7 60,42 62,40 66.5,37.4", "56,45 58.6,45.6 62,43.5 66,42 68,41 70.9,42.2 73.5,43 80.2,42.2 77,41 73.7,39.6 73.6,38.5 74.9,37.2",
  "68.2,23.7 70.8,24.4 70,28 73,29.5 74.5,31 74.5,33 77.8,35.5 75,37", "77.8,35.5 79,32.5 81,30.2 86,28 92,27.8 97,28.3", "80.2,28.8 83,27.5 88,26.4 88.1,27.9",
  "89,21.8 88.5,24.5 88.4,26.4 90,25.3 92.3,25 92.3,23 92.6,21 93.3,24 95,26.5 97,28.3 98.5,27.5 97.7,24.5 99.3,22 101,21.5 102.5,22.7 105,23.2 106.8,22 108,21.6",
  "101.2,21.5 100.1,20.3 97.8,18.5 98.8,16 99.2,13 98.7,10.3", "102.2,22.4 104.8,20.2 105,18.7 107.5,16 107.6,14.5 106,11 104.6,10.4", "100.1,20.3 101.2,17.6 104,18.3 105.5,14.4 107.5,14.5", "105.5,14.4 102.5,13.6 102.8,11.8", "100.1,6.5 102,6.1",
  "80.2,42.2 80.3,45 82.5,45.3 83,47.2 85.6,47.2 87.3,49.1 83,51 80,50.8 76.5,54.3 71,54.2 69,55.3 65,54.5 61,54 59.5,50.6 55,51 51,51.6 47,49.5 46.7,48.5 49,46.4",
  "87.8,49.2 92,50.8 98,50.5 98,52 102.3,51.3 107,49.9 116.7,49.9 115.8,47.9 119.8,46.7 111.9,43.7 109,42.5 105,41.6 96.5,42.8 91,45 90.9,47 87.8,49.2",
  "116.7,49.9 120,53.3 126,53 127.6,50 131,47.8 135,48.4 133,45 131,44.8 131,42.6", "124.4,40 127,41.6 130.5,42.3", "126.7,37.8 128.4,38.6",
  "79,32.5 82,35.8 90,36 92,34 96.5,32.6 99,29 98.5,27.5", "96.5,42.8 96,40 92,39 90,38.500 90,36", "96,40 103,38 104,35.500 101,33.5 97,33", "104,35.5 107,38.500 109,42.500",
  "101,33.5 105,32.8 109,32 112,33.2 116,32.5 119.3,35", "105,32.8 104.5,28.5 99,29", "104.5,28.5 109,29 110.3,26 114,25.2 116,29.8 112,29.6 109,29", "114,25.2 118,24.4", "110.3,26 106,24.800 105,23.2", "116,29.8 119,29 121,30.5",
  "-1.8,43.4 .7,42.8 3.1,42.4", "-8.8,42 -6.5,41.8 -7,39.8 -7.2,38 -7.4,37.2", "2.5,51.1 4.2,50 6,49.5 8.2,49 7.6,47.6 6,46.4 7,45.8 7.5,43.8",
  "14.2,53.9 14.7,51 12.3,50.3 13.8,48.8 13,47.6 9.6,47.5 7.6,47.6", "6,49.5 6,51.8 7.1,53.3", "8.6,54.9 10,54.8", "14.7,51 17,50.3 18.9,49.5 22.6,49.1 24,50.6 23.5,52.5 23.8,54 19.8,54.4",
  "23.5,51.6 27,51.5 31,51.5 33.8,52.3 37,50.3 40,49.5 39.8,47.9 38.2,47.1", "22.6,49.1 22.9,48 26.6,48.2 28.2,45.5 29.6,45.3", "17,48 20.5,48.5 22.9,48 20.3,46.1 17,45.9 16.1,46.9 17,48",
  "20.3,46.1 22.7,44.2 27,44.1 28.6,43.8", "22.7,44.2 22.4,42.3 23,41.3 26.4,41.7 28,42", "20,42 21,41 23,41.3", "13.6,45.5 16.1,46.9", "15.8,44.8 19,45 18.5,42.5", "31.8,52 32.7,53.4 31,54.7 30.9,55.6 28.2,56.1 26.6,55.6 24,54",
  "21,56.1 26.6,55.7 28.2,56.2 27.4,57.5 25,58 24.4,57.9", "27.4,57.5 28,59.4", "11.2,59 12,61", "-7.5,55 -8,54.4 -6.2,54.1", "41.5,41.5 46.5,41.8 48.5,41.8", "43.5,41.1 44.8,39.7 48,39.7", "40,43.5 44,42.700 47,41.5",
  "110,1 112,1.400 114.800,1 115.200,4.800", "129,-14.9 129,-32", "129,-26 138,-26", "-43,-7 -41,-9 -38,-9 -35,-9", "-40.5,-3 -41,-7", "-37.5,-5 -38.500,-7 -35,-7", "-43,-14.500 -40,-17 -39,-18",
].map((s, i) => trace(parse(s), 0.24, 131 + i)).join("");

// Province mesh: jittered honeycomb cells over a rectangle [x0, y0, x1, y1, cell size].
const MESH_ZONES = [
  [195, 100, 260, 205, 11], [260, 78, 330, 205, 9], [330, 48, 430, 200, 13], [430, 0, 520, 175, 19], [380, 0, 430, 48, 14], [270, 0, 370, 70, 11],
  [520, 0, 620, 210, 21], [620, 0, 1015, 120, 36], [620, 120, 720, 160, 30], [800, 120, 1015, 230, 27], [320, 175, 400, 200, 12],
  [380, 170, 520, 250, 9], [520, 195, 560, 290, 14], [560, 200, 690, 270, 12], [560, 270, 680, 375, 22], [690, 260, 830, 340, 17],
  [830, 230, 950, 320, 25], [720, 320, 850, 420, 18], [450, 250, 520, 330, 24], [150, 320, 240, 395, 14], [240, 345, 330, 400, 9],
  [330, 330, 480, 410, 14], [290, 400, 360, 500, 14], [400, 400, 480, 500, 12], [360, 430, 400, 560, 24], [430, 460, 480, 560, 13],
  [300, 500, 400, 560, 19], [370, 550, 450, 610, 14], [520, 520, 600, 640, 10], [0, 440, 60, 580, 18], [960, 190, 1015, 260, 7],
  [740, 420, 1015, 500, 22],
];

function meshPath() {
  const parts: string[] = [];
  MESH_ZONES.forEach(([x0, y0, x1, y1, c], z) => {
    const r = rng(900 + z * 17);
    const w = c * 1.0;
    const h = c * 0.9;
    const cols = Math.ceil((x1 - x0) / w) + 1;
    const rows = Math.ceil((y1 - y0) / h) + 1;
    const v: Pt[][] = [];
    for (let j = 0; j <= rows; j++) {
      v.push([]);
      for (let i = 0; i <= cols; i++) v[j].push([x0 + (i + (r() - 0.5) * 0.85) * w, y0 + (j + (r() - 0.5) * 0.85 + (i % 2 ? 0.25 : -0.25)) * h]);
    }
    for (let j = 0; j < rows; j++)
      for (let i = 0; i < cols; i++) {
        if (r() > 0.12) parts.push(trace([v[j][i], v[j][i + 1]], 0.7, 7 + i * 31 + j * 101 + z));
        if ((i + j) % 2 === 0 && r() > 0.08) parts.push(trace([v[j][i], v[j + 1][i]], 0.7, 5 + i * 57 + j * 13 + z));
      }
  });
  return parts.join("");
}
const MESH = meshPath();

// [text, centre x, centre y, width]
const LABELS: [string, number, number, number][] = [
  ["ESTONIA", 389, 9, 45], ["LATVIA", 385, 30, 38], ["DENMARK", 304, 42, 52], ["UNITED", 226, 45, 40], ["KINGDOM", 226, 58, 52],
  ["BELARUS", 402, 64, 48], ["GERMANY", 304, 85.5, 54], ["UKRAINE", 423, 100, 45], ["FRANCE", 255.5, 124, 44], ["AUSTRIA", 320, 119, 45],
  ["ROMANIA", 385.5, 129.500, 49], ["ANDORRA", 254, 157, 53], ["ITALY", 317, 156, 31], ["BULGARIA", 389.5, 156.5, 52], ["SPAIN", 217.5, 181, 32],
  ["GREECE", 370, 183.5, 41], ["TURKEY", 443.5, 184, 41], ["ARMENIA", 499, 170.5, 48], ["SYRIA", 466.7, 214.5, 29], ["ISRAEL", 443, 236, 35],
  ["TUNISIA", 298, 220, 40], ["MOROCCO", 203.5, 238, 55], ["ALGERIA", 262, 259, 44], ["LIBYA", 348, 266, 30], ["EGYPT", 411, 270, 36],
  ["SAUDI", 486, 267, 33], ["ARABIA", 486, 280.5, 40], ["MAURITANIA", 192.5, 307, 66], ["NIGER", 298, 322, 31],
  ["ОКРУГ — ЮГРА", 635.5, 6, 71], ["BASHKORTOSTAN", 563.5, 48, 88], ["БАШКОРТОСТАН", 563.5, 62.5, 79], ["ALTAI KRAI", 715.5, 64.5, 53],
  ["АЛТАЙСКИЙ КРАЙ", 714.5, 79.5, 86], ["TUVA", 779, 71, 27], ["СПУБЛИКА", 785, 85.5, 51], ["ТЫВА", 779, 97.5, 26], ["BURYATIA", 867.7, 64.5, 49],
  ["БУРЯТИЯ", 867.7, 79.5, 43], ["AMUR OBLAST", 975.7, 64, 70], ["АМУРСКАЯ ОБЛАС", 970, 78.5, 87], ["HEILONGJIANG", 973, 101, 72], ["PROVINCE", 973, 113, 50],
  ["黑龙江省", 973, 127.7, 39], ["KAZAKHSTAN", 616, 119, 72], ["MONGOLIA", 835.7, 122.5, 56], ["INNER MONGOLIA", 895, 145.5, 85], ["内蒙古自治区", 895, 160.5, 59],
  ["KYRGYZSTAN", 670, 165, 70], ["HEBEI PROVINCE", 905, 177.7, 80], ["河北省", 905, 192.5, 29], ["TURKMENISTAN", 583, 181, 81], ["SOUTH", 971, 194, 38],
  ["KOREA", 971, 207, 38], ["IRAN", 555, 228, 26], ["AFGHANISTAN", 622, 220.5, 76], ["LADAKH", 687, 219.5, 41], ["CHINA", 842, 212, 33],
  ["PAKISTAN", 650, 243, 54], ["CHONGQING", 859, 239.5, 61], ["重庆", 859, 255, 19], ["ZHEJIANG", 928, 246.5, 49], ["浙江省", 928, 261.5, 29],
  ["NEPAL", 723, 258, 35], ["ARUNACHAL", 783, 252.5, 62], ["PRADESH", 783, 264.5, 47], ["RAJASTHAN", 664.5, 266.5, 60], ["UNITED ARAB", 552, 277.5, 71],
  ["EMIRATES", 552.5, 290.5, 52], ["BANGLADESH", 758.5, 281.5, 72], ["GUANGXI", 865, 278.5, 45], ["广西壮族自治区", 865, 293.5, 69], ["TAIWAN", 933, 284.5, 44],
  ["INDIA", 692, 294, 29], ["LAOS", 833, 308.5, 29], ["MAHARASHTRA", 675, 315.5, 76], ["ANDHRA PRADESH", 701, 333, 92], ["MYANMAR", 791.5, 325.5, 56],
  ["TAMIL NADU", 691, 362.5, 62], ["VIETNAM", 861.5, 348.5, 50], ["SRI LANKA", 704, 382, 54], ["BRUNEI", 897, 399.5, 38], ["SUMATERA UTARA", 810, 412.5, 92],
  ["MALUKU UTARA", 972.7, 421.5, 78], ["SUMATERA", 837, 436.5, 55], ["SELATAN", 837, 448.5, 46], ["SULAWESI", 937.5, 439, 51], ["TENGGARA", 937.5, 451, 54],
  ["JAWA TIMUR", 885, 469, 63], ["EAST TIMOR", 961, 473.5, 63], ["YEMEN", 517.5, 330.5, 37], ["SOMALIA", 524, 377, 48], ["MALI", 232, 330.5, 25],
  ["SENEGAL", 162.7, 341.5, 48], ["BURKINA", 235.5, 349.5, 45], ["FASO", 235.5, 362, 29], ["GUINEA", 184, 363.5, 39], ["NIGERIA", 290.5, 370, 42],
  ["GHANA", 238.7, 379, 39], ["LIBERIA", 191.7, 392, 38], ["CHAD", 353, 335, 30], ["SUDAN", 413, 341, 37], ["ERITREA", 461, 333, 43],
  ["ETHIOPIA", 464.7, 366.5, 50], ["SOUTH", 413.7, 373.5, 36], ["SUDAN", 413.7, 386.5, 37], ["EQUATORIAL", 304.7, 409, 68], ["GUINEA", 304.7, 422.5, 39],
  ["DEMOCRATIC", 380.7, 421.5, 72], ["REPUBLIC", 380.7, 435, 51], ["OF THE", 380.7, 448.5, 39], ["CONGO", 380.7, 461.5, 41], ["KENYA", 463.5, 416.5, 37],
  ["TANZANIA", 448.7, 462, 55], ["ANGOLA", 345, 492.5, 45], ["ZAMBIA", 401.7, 508.5, 40], ["MOZAMBIQUE", 443.7, 537, 72], ["NAMIBIA", 343.5, 560.5, 44],
  ["LIMPOPO", 412, 562.5, 44], ["SOUTH", 387, 589.5, 37], ["AFRICA", 387, 603, 39], ["WESTERN CAPE", 363, 627.7, 77], ["AUÍ", 8, 468.5, 15],
  ["SERGIPE", 32.5, 486, 39], ["RITO SANTO", 29, 538, 56], ["WESTERN", 934, 567.5, 46], ["AUSTRALIA", 933.7, 579.5, 54], ["AUSTR", 997.5, 570.5, 34], ["SOUTH A", 992, 607.5, 44],
];

const POINTS = [
  { x: 262.5, y: 86, r: 20.3 }, { x: 577.3, y: 288.700, r: 14.3 }, { x: 848.5, y: 393, r: 13.3 }, { x: 853, y: 462.7, r: 13.3 },
];

const MapLabel = styled.text`
  font-family: Inter, "Noto Sans", "Noto Sans CJK SC", sans-serif;
  font-size: 11px;
  font-weight: 500;
  fill: #747e90;
  stroke: #1a1d22;
  stroke-width: 2px;
  paint-order: stroke;
  text-anchor: middle;
`;

function WorldMap() {
  return (
    <MapPanel>
      <svg width="1015" height="644" viewBox="0 0 1015 644" style={{ display: "block" }}>
        <defs><clipPath id="land"><path d={COASTS} /></clipPath></defs>
        <path d={COASTS} fill="#151a1d" />
        <g clipPath="url(#land)" fill="none">
          <path d={MESH} stroke="#4a4d5c" strokeWidth=".85" strokeDasharray="4 .8" />
          <path d={BORDERS} stroke="#4a4c58" strokeWidth="1" />
          <path d="M387 298H454.500M387.300 233V298M359 582.500V528M365 545V528H364M563.500 139V165" stroke="#4a4c58" />
          <path d={LAKES} fill="#222220" />
        </g>
        {LABELS.map(([t, x, y, w], i) => (
          <MapLabel key={i} x={x} y={y + 4} textLength={w} lengthAdjust="spacingAndGlyphs">{t}</MapLabel>
        ))}
        {POINTS.map((p) => (
          <circle key={p.x} cx={p.x} cy={p.y} r={p.r} fill="#fed976" fillOpacity=".75" stroke="#b9922f" strokeWidth="1" />
        ))}
        <circle cx="437.300" cy="507.500" r="13" fill="#800026" fillOpacity=".78" stroke="#4d0010" />
      </svg>
      <MapTools>
        <ToolGroup>
          <Tool><svg width="16" height="16" viewBox="0 0 16 16"><circle cx="8" cy="8" r="7.700" fill="#dbe2ee" /><path d="M4 8H12M8 4V12" stroke="#fff" strokeWidth="1.200" /></svg></Tool>
          <Tool><svg width="16" height="16" viewBox="0 0 16 16"><circle cx="8" cy="8" r="7.700" fill="#dbe2ee" /><path d="M4 8H12" stroke="#fff" strokeWidth="1.200" /></svg></Tool>
        </ToolGroup>
        <ToolGroup>
          <Tool><svg width="12" height="12" viewBox="0 0 12 12"><path d="M3 0V9H12M0 3H9V12" fill="none" stroke="#e3e7f3" strokeWidth="1.700" /></svg></Tool>
        </ToolGroup>
        <ToolGroup>
          <Tool><svg width="12" height="12" viewBox="0 0 12 12"><path d="M5.500 0L12 4.200L10.300 11.200L3.300 12L0 5.500Z" fill="#404040" /></svg></Tool>
          <Tool><svg width="10" height="10" viewBox="0 0 10 10"><rect width="10" height="10" fill="#404040" /></svg></Tool>
        </ToolGroup>
      </MapTools>
      <MapLegend>
        <h3>Flow Records</h3>
        <Band><BandDot $c="#fed976" $b="#d8ab3c" />4 – 541,502</Band>
        <Band><BandDot $c="#fd8d3c" $b="#c9640f" />541,502 – 1,083,000</Band>
        <Band><BandDot $c="#f03b20" $b="#b21c08" />1,083,000 – 1,624,498</Band>
        <Band><BandDot $c="#800026" $b="#4d0010" />1,624,498 – 2,165,996</Band>
      </MapLegend>
      <Attribution>
        <a>OpenStreetMap contributors</a>, <a>OpenMapTiles</a>, <a>Elastic Maps Service</a>
      </Attribution>
    </MapPanel>
  );
}

export default function App() {
  return (
    <Page>
      <Global />
      <BrowserChrome />
      <Below>
        <App_>
          <KibanaHeader />
          <NavRow>
            <Tabs $w={1095} $mr={16}><TabList items={NAV} active="Geo IP" /></Tabs>
            <Tabs $w={579} $mr={24}><TabList items={SIDES} active="Client" /></Tabs>
            <Logo>
              <svg width="24" height="32" viewBox="0 0 24 32">
                <path d="M0 0H23.500L21.500 6.500H7.500V12.500H17.500L15.500 19H7.500V24.500L5 32H0Z" fill="#38bdf8" />
                <path d="M9 26H12.500L10 32H6.500Z M14.500 26H18L15.500 32H12Z" fill="#2ea7e8" />
                <path d="M20 26H23.500L21 32H17.500Z" fill="#1b8fdc" />
              </svg>
              ElastiFlow
            </Logo>
          </NavRow>
          <Filters>
            {["Flow Exporter", "Client", "Server", "Service", "Session Established"].map((name, i) => (
              <div key={name}>
                <FilterLabel>
                  <svg width="15" height="14" viewBox="0 0 15 14" fill="none" stroke="#dfe5ef" strokeWidth="1"><path d="M7.500 1L14 13H1Z" strokeLinejoin="round" /><path d="M7.500 5V9.500M7.500 10.500V11.700" /></svg>
                  {name}
                </FilterLabel>
                <Select $pad={i === 4 ? 7 : 11}>
                  Select...
                  <svg width="14" height="8" viewBox="0 0 14 8"><path d="M1 1L7 7L13 1" fill="none" stroke="#dfe5ef" strokeWidth="1.300" /></svg>
                </Select>
              </div>
            ))}
          </Filters>
          <Board>
            <PanelColumn>{LEFT.map((c) => <DonutPanel key={c.title} chart={c} />)}</PanelColumn>
            <WorldMap />
            <PanelColumn $right>{RIGHT.map((c) => <DonutPanel key={c.title} chart={c} right />)}</PanelColumn>
          </Board>
        </App_>
        <ScrollTrack><div /></ScrollTrack>
      </Below>
    </Page>
  );
}
